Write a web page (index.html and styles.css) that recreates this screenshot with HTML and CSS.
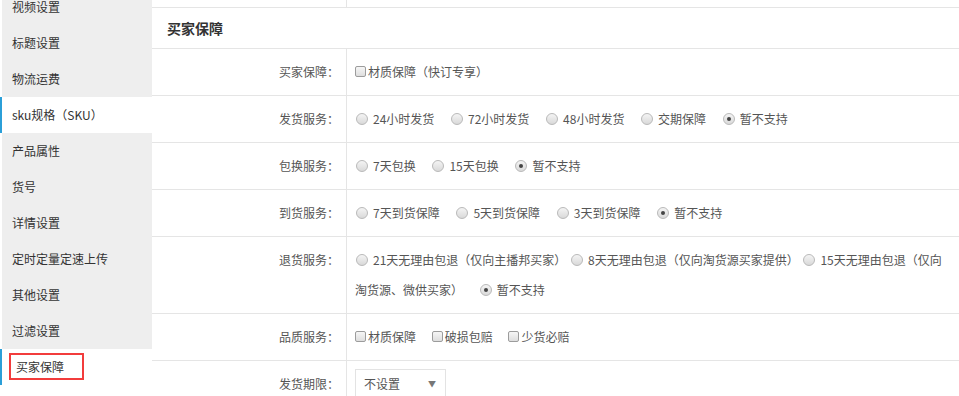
FILE: index.html
```
<!DOCTYPE html>
<html lang="zh-CN">
<head>
    <meta charset="UTF-8">
    <title>买家保障</title>
    <link rel="stylesheet" href="styles.css">
</head>
<body>
    <ul class="side-nav">
        <li>视频设置</li>
        <li>标题设置</li>
        <li>物流运费</li>
        <li class="active">sku规格（SKU）</li>
        <li>产品属性</li>
        <li>货号</li>
        <li>详情设置</li>
        <li>定时定量定速上传</li>
        <li>其他设置</li>
        <li>过滤设置</li>
        <li class="active"><span class="marked">买家保障</span></li>
    </ul>

    <div class="main">
        <div class="row row-prev">
            <div class="label"></div>
            <div class="value"></div>
        </div>
        <div class="section-title">买家保障</div>

        <div class="row">
            <div class="label">买家保障：</div>
            <div class="value">
                <label class="opt"><span class="check"></span>材质保障（快订专享）</label>
            </div>
        </div>

        <div class="row">
            <div class="label">发货服务：</div>
            <div class="value">
                <label class="opt"><span class="radio"></span>24小时发货</label>
                <label class="opt"><span class="radio"></span>72小时发货</label>
                <label class="opt"><span class="radio"></span>48小时发货</label>
                <label class="opt"><span class="radio"></span>交期保障</label>
                <label class="opt"><span class="radio checked"></span>暂不支持</label>
            </div>
        </div>

        <div class="row">
            <div class="label">包换服务：</div>
            <div class="value">
                <label class="opt"><span class="radio"></span>7天包换</label>
                <label class="opt"><span class="radio"></span>15天包换</label>
                <label class="opt"><span class="radio checked"></span>暂不支持</label>
            </div>
        </div>

        <div class="row">
            <div class="label">到货服务：</div>
            <div class="value">
                <label class="opt"><span class="radio"></span>7天到货保障</label>
                <label class="opt"><span class="radio"></span>5天到货保障</label>
                <label class="opt"><span class="radio"></span>3天到货保障</label>
                <label class="opt"><span class="radio checked"></span>暂不支持</label>
            </div>
        </div>

        <div class="row">
            <div class="label">退货服务：</div>
            <div class="value">
                <label class="opt tight"><span class="radio"></span>21天无理由包退（仅向主播邦买家）</label>
                <label class="opt tight"><span class="radio"></span>8天无理由包退（仅向淘货源买家提供）</label>
                <label class="opt"><span class="radio"></span>15天无理由包退（仅向淘货源、微供买家）</label>
                <label class="opt"><span class="radio checked"></span>暂不支持</label>
            </div>
        </div>

        <div class="row">
            <div class="label">品质服务：</div>
            <div class="value">
                <label class="opt"><span class="check"></span>材质保障</label>
                <label class="opt"><span class="check"></span>破损包赔</label>
                <label class="opt"><span class="check"></span>少货必赔</label>
            </div>
        </div>

        <div class="row">
            <div class="label">发货期限：</div>
            <div class="value">
                <div class="select"><span>不设置</span><span class="arrow">▼</span></div>
            </div>
        </div>
    </div>
</body>
</html>
```
FILE: styles.css
```
body {
    margin: 0;
    display: flex;
    align-items: flex-start;
    height: 396px;
    overflow: hidden;
    background-color: #fff;
    font-family: "Noto Sans CJK SC", "Microsoft YaHei", sans-serif;
    font-size: 12px;
    color: #555;
}

/* left menu */
.side-nav {
    list-style: none;
    margin: -11px 0 0 2px;
    padding: 0;
    width: 150px;
    flex-shrink: 0;
    background-color: #eee;
}
.side-nav li {
    height: 36px;
    line-height: 36px;
    padding-left: 10px;
    color: #333;
    border-left: 2px solid transparent;
    margin-left: -2px;
}
.side-nav li.active {
    background-color: #fff;
    border-left-color: #2b9fd8;
}
.marked {
    display: inline-block;
    margin-left: -3px;
    padding: 3px 18px 3px 5px;
    line-height: 17px;
    border: 2px solid #f23c3c;
    vertical-align: middle;
    margin-top: -4px;
}

/* form table */
.main {
    flex: 1;
}
.row {
    display: grid;
    grid-template-columns: 195px 1fr;
    border-bottom: 1px solid #e5e5e5;
}
.row-prev {
    height: 7px;
}
.label {
    border-right: 1px solid #e5e5e5;
    text-align: right;
    padding: 8px 7px 8px 0;
    line-height: 30px;
}
.row-prev .label,
.row-prev .value {
    padding: 0;
}
.value {
    padding: 8px 8px;
    line-height: 30px;
}
.section-title {
    height: 40px;
    line-height: 40px;
    padding-left: 15px;
    font-size: 14px;
    font-weight: bold;
    color: #333;
    border-bottom: 1px solid #e5e5e5;
}

.opt {
    margin-right: 13px;
}
.opt.tight {
    margin-right: 1px;
}
.radio {
    display: inline-block;
    position: relative;
    width: 10px;
    height: 10px;
    margin: 0 5px 0 1px;
    border: 1px solid #b9b9b9;
    border-radius: 50%;
    background: linear-gradient(#f4f4f4, #d9d9d9);
    vertical-align: -1px;
}
.radio.checked::after {
    content: "";
    position: absolute;
    left: 3px;
    top: 3px;
    width: 4px;
    height: 4px;
    border-radius: 50%;
    background-color: #444;
}
.check {
    display: inline-block;
    width: 9px;
    height: 9px;
    margin-right: 2px;
    border: 1px solid #9c9c9c;
    border-radius: 2px;
    background: linear-gradient(#f6f6f6, #dedede);
    vertical-align: 0;
}

.select {
    display: inline-flex;
    justify-content: space-between;
    box-sizing: border-box;
    width: 91px;
    height: 30px;
    line-height: 28px;
    padding: 0 9px 0 8px;
    border: 1px solid #e3e3e3;
    vertical-align: top;
}
.arrow {
    font-size: 8px;
    color: #777;
}
```
